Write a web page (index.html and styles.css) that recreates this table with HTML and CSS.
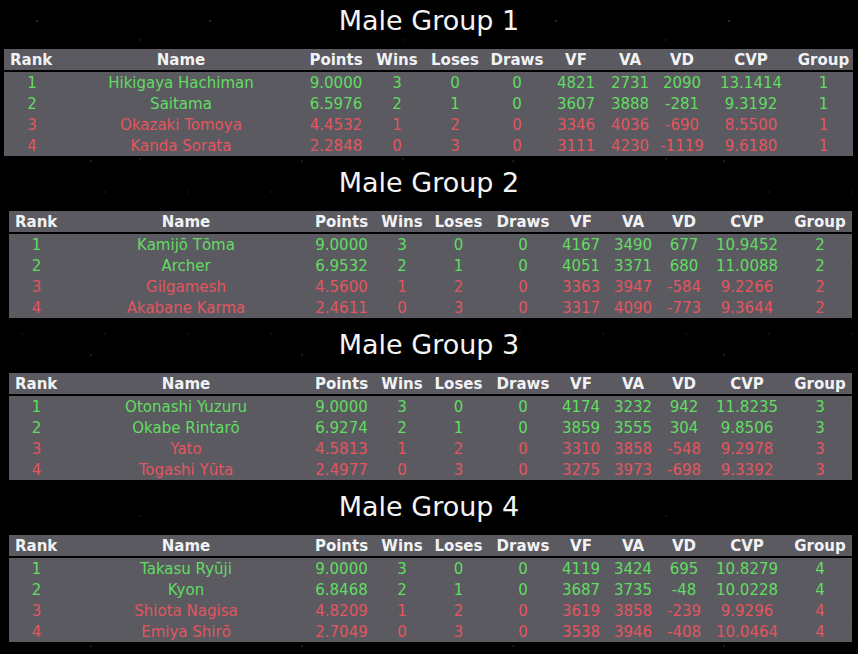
FILE: index.html
```html
<!DOCTYPE html>
<html>
<head>
<meta charset="utf-8">
<title>Male Groups</title>
<link rel="stylesheet" href="styles.css">
</head>
<body>
<main class="page">
  <section class="group">
    <h2 class="group-title">Male Group 1</h2>
    <table class="standings wide">
      <colgroup><col><col><col><col><col><col><col><col><col><col><col></colgroup>
      <thead><tr><th>Rank</th><th>Name</th><th>Points</th><th>Wins</th><th>Loses</th><th>Draws</th><th>VF</th><th>VA</th><th>VD</th><th>CVP</th><th>Group</th></tr></thead>
      <tbody>
        <tr class="up"><td>1</td><td>Hikigaya Hachiman</td><td>9.0000</td><td>3</td><td>0</td><td>0</td><td>4821</td><td>2731</td><td>2090</td><td>13.1414</td><td>1</td></tr>
        <tr class="up"><td>2</td><td>Saitama</td><td>6.5976</td><td>2</td><td>1</td><td>0</td><td>3607</td><td>3888</td><td>-281</td><td>9.3192</td><td>1</td></tr>
        <tr class="down"><td>3</td><td>Okazaki Tomoya</td><td>4.4532</td><td>1</td><td>2</td><td>0</td><td>3346</td><td>4036</td><td>-690</td><td>8.5500</td><td>1</td></tr>
        <tr class="down"><td>4</td><td>Kanda Sorata</td><td>2.2848</td><td>0</td><td>3</td><td>0</td><td>3111</td><td>4230</td><td>-1119</td><td>9.6180</td><td>1</td></tr>
      </tbody>
    </table>
  </section>
  <section class="group">
    <h2 class="group-title">Male Group 2</h2>
    <table class="standings narrow">
      <colgroup><col><col><col><col><col><col><col><col><col><col><col></colgroup>
      <thead><tr><th>Rank</th><th>Name</th><th>Points</th><th>Wins</th><th>Loses</th><th>Draws</th><th>VF</th><th>VA</th><th>VD</th><th>CVP</th><th>Group</th></tr></thead>
      <tbody>
        <tr class="up"><td>1</td><td>Kamijō Tōma</td><td>9.0000</td><td>3</td><td>0</td><td>0</td><td>4167</td><td>3490</td><td>677</td><td>10.9452</td><td>2</td></tr>
        <tr class="up"><td>2</td><td>Archer</td><td>6.9532</td><td>2</td><td>1</td><td>0</td><td>4051</td><td>3371</td><td>680</td><td>11.0088</td><td>2</td></tr>
        <tr class="down"><td>3</td><td>Gilgamesh</td><td>4.5600</td><td>1</td><td>2</td><td>0</td><td>3363</td><td>3947</td><td>-584</td><td>9.2266</td><td>2</td></tr>
        <tr class="down"><td>4</td><td>Akabane Karma</td><td>2.4611</td><td>0</td><td>3</td><td>0</td><td>3317</td><td>4090</td><td>-773</td><td>9.3644</td><td>2</td></tr>
      </tbody>
    </table>
  </section>
  <section class="group">
    <h2 class="group-title">Male Group 3</h2>
    <table class="standings narrow">
      <colgroup><col><col><col><col><col><col><col><col><col><col><col></colgroup>
      <thead><tr><th>Rank</th><th>Name</th><th>Points</th><th>Wins</th><th>Loses</th><th>Draws</th><th>VF</th><th>VA</th><th>VD</th><th>CVP</th><th>Group</th></tr></thead>
      <tbody>
        <tr class="up"><td>1</td><td>Otonashi Yuzuru</td><td>9.0000</td><td>3</td><td>0</td><td>0</td><td>4174</td><td>3232</td><td>942</td><td>11.8235</td><td>3</td></tr>
        <tr class="up"><td>2</td><td>Okabe Rintarō</td><td>6.9274</td><td>2</td><td>1</td><td>0</td><td>3859</td><td>3555</td><td>304</td><td>9.8506</td><td>3</td></tr>
        <tr class="down"><td>3</td><td>Yato</td><td>4.5813</td><td>1</td><td>2</td><td>0</td><td>3310</td><td>3858</td><td>-548</td><td>9.2978</td><td>3</td></tr>
        <tr class="down"><td>4</td><td>Togashi Yūta</td><td>2.4977</td><td>0</td><td>3</td><td>0</td><td>3275</td><td>3973</td><td>-698</td><td>9.3392</td><td>3</td></tr>
      </tbody>
    </table>
  </section>
  <section class="group">
    <h2 class="group-title">Male Group 4</h2>
    <table class="standings narrow">
      <colgroup><col><col><col><col><col><col><col><col><col><col><col></colgroup>
      <thead><tr><th>Rank</th><th>Name</th><th>Points</th><th>Wins</th><th>Loses</th><th>Draws</th><th>VF</th><th>VA</th><th>VD</th><th>CVP</th><th>Group</th></tr></thead>
      <tbody>
        <tr class="up"><td>1</td><td>Takasu Ryūji</td><td>9.0000</td><td>3</td><td>0</td><td>0</td><td>4119</td><td>3424</td><td>695</td><td>10.8279</td><td>4</td></tr>
        <tr class="up"><td>2</td><td>Kyon</td><td>6.8468</td><td>2</td><td>1</td><td>0</td><td>3687</td><td>3735</td><td>-48</td><td>10.0228</td><td>4</td></tr>
        <tr class="down"><td>3</td><td>Shiota Nagisa</td><td>4.8209</td><td>1</td><td>2</td><td>0</td><td>3619</td><td>3858</td><td>-239</td><td>9.9296</td><td>4</td></tr>
        <tr class="down"><td>4</td><td>Emiya Shirō</td><td>2.7049</td><td>0</td><td>3</td><td>0</td><td>3538</td><td>3946</td><td>-408</td><td>10.0464</td><td>4</td></tr>
      </tbody>
    </table>
  </section>
</main>
</body>
</html>
```

FILE: styles.css
```css
html, body {
  margin: 0;
  padding: 0;
}

body {
  background-color: #000;
  background-image:
    radial-gradient(circle at 37px 21px, rgba(255,255,255,0.16) 0.7px, transparent 1.5px),
    radial-gradient(circle at 91px 64px, rgba(255,255,255,0.10) 0.7px, transparent 1.5px),
    radial-gradient(circle at 13px 97px, rgba(255,255,255,0.13) 0.7px, transparent 1.5px),
    radial-gradient(circle at 140px 40px, rgba(255,255,255,0.08) 0.7px, transparent 1.5px),
    radial-gradient(circle at 60px 120px, rgba(255,255,255,0.10) 0.6px, transparent 1.4px),
    radial-gradient(circle at 22px 50px, rgba(255,255,255,0.07) 0.6px, transparent 1.4px);
  background-size: 173px 131px, 211px 97px, 149px 157px, 263px 119px, 197px 173px, 83px 71px;
  font-family: "DejaVu Sans", Verdana, sans-serif;
  color: #f0f0f0;
  min-height: 654px;
}

.page {
  display: flex;
  flex-direction: column;
  gap: 6px;
}

.group {
  display: flex;
  flex-direction: column;
}

.group-title {
  margin: 5px 0 12px;
  font-family: "DejaVu Sans", Tahoma, sans-serif;
  font-weight: normal;
  font-size: 27px;
  line-height: 32px;
  text-align: center;
  color: #f4f4f4;
}

.standings {
  border-collapse: separate;
  border-spacing: 0;
  table-layout: fixed;
  background: #5a5a60;
  font-size: 15px;
  line-height: 20px;
}

.standings th,
.standings td {
  padding: 1px 0 0;
  text-align: center;
  white-space: nowrap;
  height: 20px;
}

.standings th {
  font-weight: bold;
  color: #f2f2f4;
  border-bottom: 2px solid #000;
}

.standings th:first-child {
  text-align: left;
  padding-left: 6px;
}

.up td { color: #62dc62; }
.down td { color: #e3555f; }

/* Group 1: wider table */
.wide {
  width: 849px;
  margin-left: 4px;
}
.wide col:nth-child(1) { width: 56px; }
.wide col:nth-child(2) { width: 242px; }
.wide col:nth-child(3) { width: 68px; }
.wide col:nth-child(4) { width: 54px; }
.wide col:nth-child(5) { width: 62px; }
.wide col:nth-child(6) { width: 62px; }
.wide col:nth-child(7) { width: 56px; }
.wide col:nth-child(8) { width: 52px; }
.wide col:nth-child(9) { width: 52px; }
.wide col:nth-child(10) { width: 86px; }
.wide col:nth-child(11) { width: 59px; }

/* Groups 2-4 */
.narrow {
  width: 843px;
  margin-left: 9px;
}
.narrow col:nth-child(1) { width: 55px; }
.narrow col:nth-child(2) { width: 244px; }
.narrow col:nth-child(3) { width: 67px; }
.narrow col:nth-child(4) { width: 54px; }
.narrow col:nth-child(5) { width: 59px; }
.narrow col:nth-child(6) { width: 70px; }
.narrow col:nth-child(7) { width: 46px; }
.narrow col:nth-child(8) { width: 58px; }
.narrow col:nth-child(9) { width: 44px; }
.narrow col:nth-child(10) { width: 82px; }
.narrow col:nth-child(11) { width: 64px; }
```
